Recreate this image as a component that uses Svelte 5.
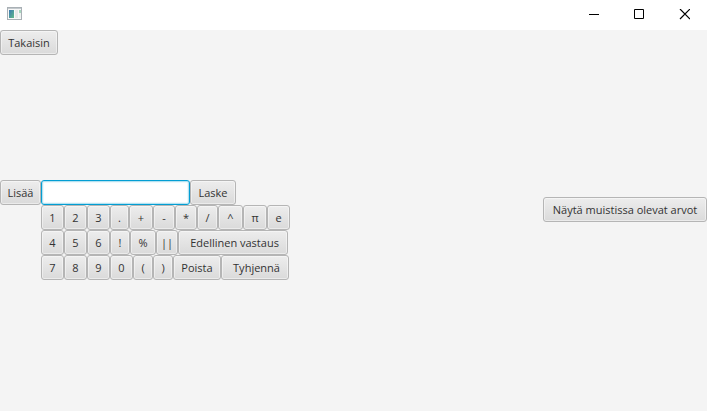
<script>
  const rows = [
    [['1', 23], ['2', 23], ['3', 23], ['.', 19], ['+', 24], ['-', 22], ['*', 22], ['/', 21], ['^', 25], ['π', 24], ['e', 23]],
    [['4', 23], ['5', 23], ['6', 23], ['!', 20], ['%', 26], ['||', 22], ['Edellinen vastaus', 110]],
    [['7', 23], ['8', 23], ['9', 23], ['0', 23], ['(', 20], [')', 20], ['Poista', 48], ['Tyhjennä', 68]]
  ];
  const indented = ['Edellinen vastaus', 'Tyhjennä'];
  let expression = $state('');
</script>

<div class="window">
  <header>
    <svg class="app-icon" width="16" height="16" viewBox="0 0 16 16" aria-hidden="true">
      <defs>
        <linearGradient id="pane" x1="0" y1="0" x2="1" y2="1">
          <stop offset="0" stop-color="#3b78b4" />
          <stop offset="1" stop-color="#62bb87" />
        </linearGradient>
      </defs>
      <rect x="0.5" y="0.5" width="14" height="12" fill="#f8f8f8" stroke="#a9b0b5" />
      <path d="M1 1.5h13" stroke="#c3c9cd" />
      <rect x="2" y="3" width="5" height="8" fill="url(#pane)" />
      <rect x="8" y="3" width="3" height="8" fill="#e8e8e8" />
      <rect x="12" y="3" width="2" height="3" fill="#a5d5bd" />
      <rect x="12" y="6" width="2" height="5" fill="#eef2f0" />
    </svg>
    <div class="controls">
      <button aria-label="Pienennä"><svg width="11" height="11" viewBox="0 0 11 11"><path d="M0 5.5h10" /></svg></button>
      <button aria-label="Suurenna"><svg width="11" height="11" viewBox="0 0 11 11"><path d="M.5.5h9v9h-9z" /></svg></button>
      <button aria-label="Sulje"><svg width="11" height="11" viewBox="0 0 11 11"><path class="cross" d="M1 0l10 10M11 0L1 10" /></svg></button>
    </div>
  </header>

  <nav><button class="key back">Takaisin</button></nav>

  <main>
    <div class="calculator">
      <button class="key add">Lisää</button>
      <div class="entry">
        <input type="text" aria-label="Lauseke" bind:value={expression} />
        <button class="key solve">Laske</button>
      </div>
      <div class="keypad">
        {#each rows as row}
          <div class="row">
            {#each row as [label, width]}
              <button class="key" class:indented={indented.includes(label)} style:width="{width}px">{label}</button>
            {/each}
          </div>
        {/each}
      </div>
    </div>
    <button class="key memory">Näytä muistissa olevat arvot</button>
  </main>
</div>

<style>
  :global(body) {
    margin: 0;
    background: #f4f4f4;
  }
  .window {
    min-height: 100vh;
    display: flex;
    flex-direction: column;
    background: #f4f4f4;
    font-family: "Segoe UI", "Open Sans", "Noto Sans", sans-serif;
    font-size: 11px;
    color: #333;
  }
  header {
    height: 30px;
    display: flex;
    align-items: center;
    justify-content: space-between;
    background: #fff;
  }
  .app-icon {
    margin-left: 7px;
  }
  .controls {
    display: flex;
    align-self: flex-start;
  }
  .controls button {
    width: 45px;
    height: 29px;
    padding: 0;
    border: 0;
    background: none;
    display: flex;
    align-items: center;
    justify-content: center;
  }
  .controls path {
    fill: none;
    stroke: #000;
  }
  .controls .cross {
    stroke-width: 1.2;
  }
  nav {
    display: flex;
  }
  .key {
    box-sizing: border-box;
    flex: none;
    height: 25px;
    padding: 0;
    border: 1px solid #b5b5b5;
    border-radius: 3px;
    background: linear-gradient(#ededed, #dadada);
    box-shadow: inset 0 0 0 1px rgba(255, 255, 255, 0.45);
    font: inherit;
    line-height: 16px;
    color: #333;
    text-align: center;
    white-space: nowrap;
  }
  .key:active {
    background: #d5d5d5;
  }
  .indented {
    padding-left: 3px;
  }
  .back {
    width: 58px;
  }
  .add {
    width: 41px;
  }
  .solve {
    width: 46px;
  }
  .memory {
    width: 164px;
    margin-top: 17px;
  }
  main {
    flex: 1;
    display: flex;
    align-items: flex-start;
    justify-content: space-between;
    padding-top: 125px;
  }
  .calculator {
    display: grid;
    grid-template-columns: auto auto;
  }
  .entry,
  .row {
    display: flex;
  }
  .keypad {
    grid-column: 2;
  }
  input {
    box-sizing: border-box;
    width: 149px;
    height: 25px;
    padding: 0 7px;
    border: 1px solid #039ed3;
    border-radius: 3px;
    outline: none;
    background: #fff;
    box-shadow: inset 0 0 0 1px #b5e1f0, inset 0 0 0 2px #eef9fc;
    font: inherit;
    color: #333;
  }
</style>
